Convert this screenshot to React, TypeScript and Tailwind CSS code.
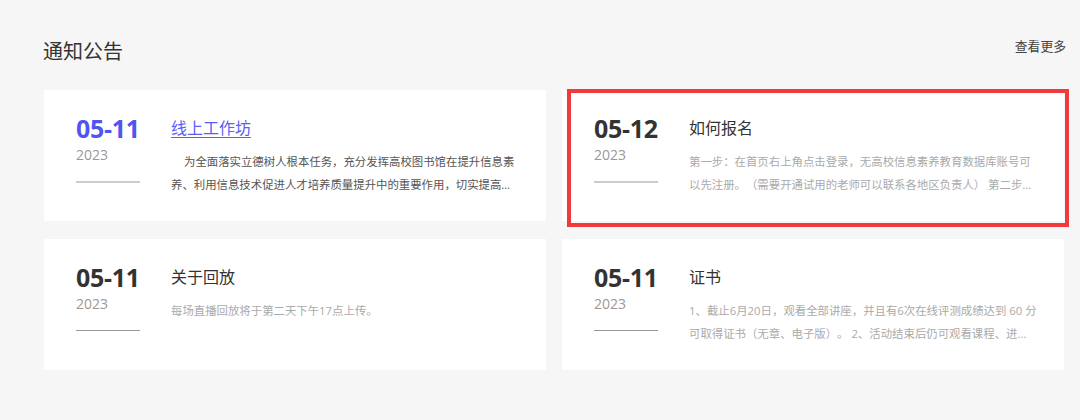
import React from "react";

type Item = {
  date: string;
  year: string;
  title: string;
  desc: string;
  active?: boolean;
  dark?: boolean;
  thickLine?: boolean;
};

const items: Item[] = [
  {
    date: "05-11",
    year: "2023",
    title: "线上工作坊",
    desc: "为全面落实立德树人根本任务，充分发挥高校图书馆在提升信息素养、利用信息技术促进人才培养质量提升中的重要作用，切实提高高校图书馆信息素养教育水平，特举办本次线上工作坊。",
    active: true,
    dark: true,
    thickLine: true,
  },
  {
    date: "05-12",
    year: "2023",
    title: "如何报名",
    desc: "第一步：在首页右上角点击登录，无高校信息素养教育数据库账号可以先注册。（需要开通试用的老师可以联系各地区负责人） 第二步：登录后点击报名。",
    thickLine: true,
  },
  {
    date: "05-11",
    year: "2023",
    title: "关于回放",
    desc: "每场直播回放将于第二天下午17点上传。",
  },
  {
    date: "05-11",
    year: "2023",
    title: "证书",
    desc: "1、截止6月20日，观看全部讲座，并且有6次在线评测成绩达到 60 分可取得证书（无章、电子版）。 2、活动结束后仍可观看课程、进行在线评测。",
  },
];

const font = {
  fontFamily: '"Open Sans", "Noto Sans CJK SC", "Noto Sans", sans-serif',
};

function Card({ item }: { item: Item }) {
  return (
    <div className="bg-white h-[131px] flex pl-[32px] pt-[24px]">
      <div className="w-[64px] shrink-0 flex flex-col">
        <div
          className={`text-[25px] leading-[28px] font-bold tracking-[-0.3px] ${
            item.active ? "text-[#4f55f3]" : "text-[#333333]"
          }`}
        >
          {item.date}
        </div>
        <div className="mt-[3px] text-[14px] leading-[20px] text-[#999999]">
          {item.year}
        </div>
        <div
          className={`mt-[16px] w-[64px] ${
            item.thickLine ? "h-[2px] bg-[#cccccc]" : "h-[1px] bg-[#999999]"
          }`}
        />
      </div>
      <div className="ml-[31px] w-[348px] flex flex-col">
        <div
          className={`text-[16px] leading-[28px] ${
            item.active
              ? "text-[#5b60f2] underline underline-offset-[3px]"
              : "text-[#333333]"
          }`}
        >
          {item.title}
        </div>
        <div
          className={`mt-[8px] text-[11.4px] leading-[23px] line-clamp-2 [text-spacing-trim:space-all] ${
            item.dark ? "text-[#555555] indent-[13px]" : "text-[#aaaaaa]"
          }`}
        >
          {item.desc}
        </div>
      </div>
    </div>
  );
}

export default function App() {
  return (
    <div
      className="w-[1080px] h-[420px] bg-[#f6f6f6] overflow-hidden"
      style={font}
    >
      <div className="relative pl-[44px] pt-[38px] w-[1064px]">
        <div className="flex justify-between items-start">
          <div className="text-[20px] leading-[28px] text-[#333333] -ml-[1px]">
            通知公告
          </div>
          <div className="text-[12.8px] leading-[20px] text-[#444444] -mt-[2px] -mr-[2px]">
            查看更多
          </div>
        </div>
        <div className="mt-[24px] grid grid-cols-2 gap-x-[16px] gap-y-[18px]">
          {items.map((it, i) => (
            <Card key={i} item={it} />
          ))}
        </div>
        <div className="absolute left-[567px] top-[89px] w-[502px] h-[138px] border-[4px] border-[#f23a3a] pointer-events-none" />
      </div>
    </div>
  );
}
